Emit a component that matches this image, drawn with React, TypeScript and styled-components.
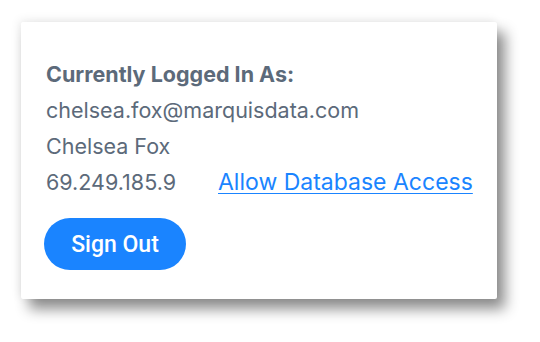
import React from "react";
import styled, { createGlobalStyle } from "styled-components";

const Global = createGlobalStyle`
  html, body { margin: 0; padding: 0; background: #ffffff; }
  body { font-family: Inter, "Noto Sans", sans-serif; }
`;

const Page = styled.div`
  width: 540px;
  height: 342px;
  padding: 22px 0 0 21px;
  box-sizing: border-box;
`;

const Card = styled.div`
  width: 476px;
  height: 277px;
  box-sizing: border-box;
  background: #ffffff;
  border-radius: 2px;
  box-shadow: 8px 10px 14px rgba(0, 0, 0, 0.45), -2px -2px 10px rgba(0, 0, 0, 0.08);
  padding: 34px 25px 0 25px;
  display: flex;
  flex-direction: column;
`;

const Heading = styled.div`
  font-size: 21.5px;
  font-weight: 700;
  color: #5c6a7a;
  line-height: 36px;
  height: 36px;
  white-space: nowrap;
`;

const Line = styled.div`
  display: flex;
  align-items: baseline;
  font-size: 21.5px;
  color: #5c6a7a;
  line-height: 36px;
  height: 36px;
  white-space: nowrap;
`;

const Ip = styled.span`
  width: 172px;
  flex-shrink: 0;
`;

const Link = styled.a`
  color: #1a84ff;
  font-size: 23px;
  flex-shrink: 0;
  text-decoration: underline;
  text-underline-offset: 3px;
  text-decoration-thickness: 1px;
`;

const Button = styled.button`
  margin-top: 18px;
  width: 142px;
  height: 52px;
  border: none;
  border-radius: 26px;
  background: #1a84ff;
  color: #ffffff;
  font-family: Roboto, sans-serif;
  font-weight: 500;
  font-size: 23px;
  padding: 0;
  align-self: flex-start;
  margin-left: -2px;
`;

export default function App() {
  return (
    <>
      <Global />
      <Page>
        <Card>
          <Heading>Currently Logged In As:</Heading>
          <Line>chelsea.fox@marquisdata.com</Line>
          <Line>Chelsea Fox</Line>
          <Line>
            <Ip>69.249.185.9</Ip>
            <Link href="#">Allow Database Access</Link>
          </Line>
          <Button>Sign Out</Button>
        </Card>
      </Page>
    </>
  );
}
